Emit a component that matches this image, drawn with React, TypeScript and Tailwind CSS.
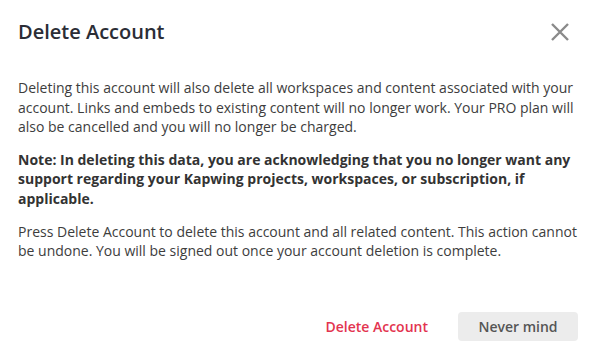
export default function App() {
  return (
    <div
      className="w-[596px] h-[361px] bg-white px-[18px] pt-[18px]"
      style={{ fontFamily: '"Open Sans", "Noto Sans", sans-serif' }}
    >
      <div className="flex h-[28px] items-center justify-between">
        <h1 className="text-[20px] font-semibold leading-[28px] text-[#2b2d36]">Delete Account</h1>
        <button className="mr-[8px] flex h-[20px] w-[20px] items-center justify-center" aria-label="Close">
          <svg width="20" height="20" viewBox="0 0 20 20" fill="none">
            <path d="M2 2L18 18M18 2L2 18" stroke="#8a8a8a" strokeWidth="2.4" />
          </svg>
        </button>
      </div>

      <div className="mt-[32px] flex flex-col gap-[13px] text-[14px] leading-[19.6px] text-[#3d3d3d]">
        <p>
          Deleting this account will also delete all workspaces and content associated with your
          account. Links and embeds to existing content will no longer work. Your PRO plan will
          also be cancelled and you will no longer be charged.
        </p>
        <p className="font-bold text-[#333]">
          Note: In deleting this data, you are acknowledging that you no longer want any support
          regarding your Kapwing projects, workspaces, or subscription, if applicable.
        </p>
        <p>
          Press Delete Account to delete this account and all related content. This action cannot
          be undone. You will be signed out once your account deletion is complete.
        </p>
      </div>

      <div className="mt-[51px] flex items-center justify-end gap-[30px]">
        <button className="text-[14px] font-semibold text-[#e3344f]">Delete Account</button>
        <button className="h-[29px] w-[120px] rounded-[4px] bg-[#ececec] text-[14px] font-semibold text-[#555]">
          Never mind
        </button>
      </div>
    </div>
  );
}
